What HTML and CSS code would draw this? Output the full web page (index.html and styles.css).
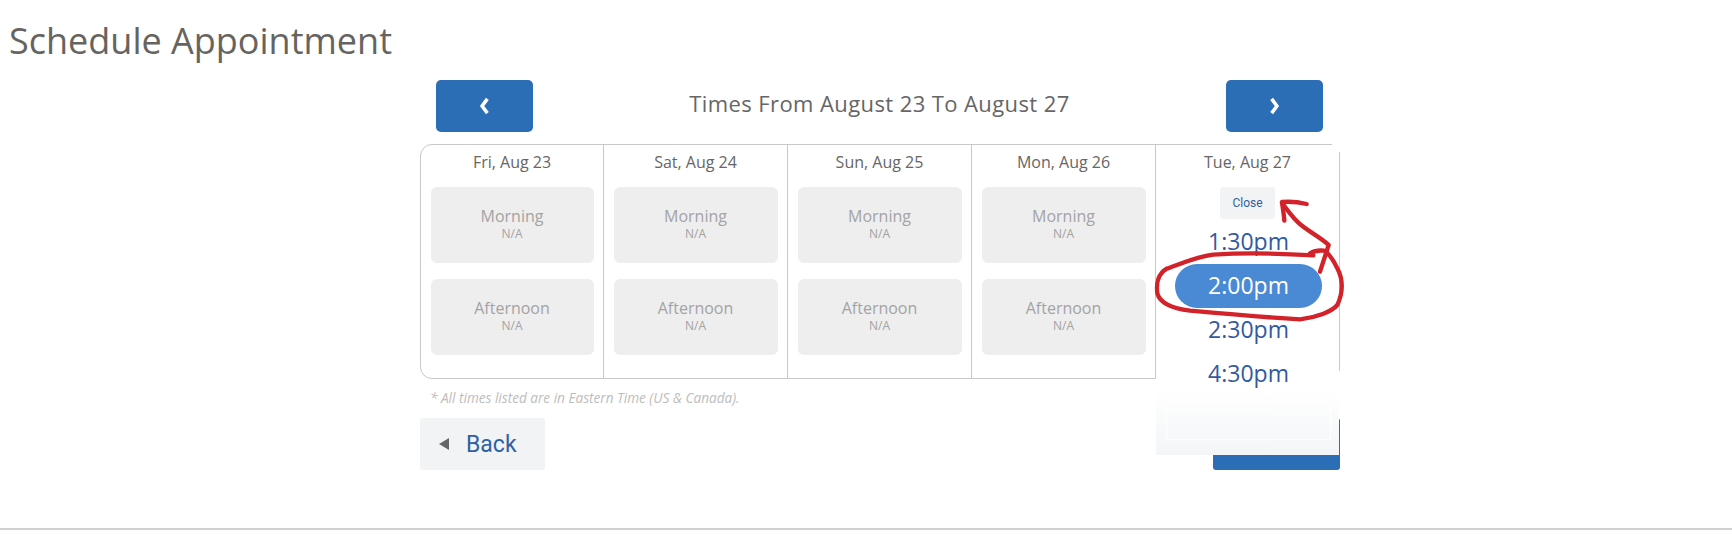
FILE: index.html
```html
<!DOCTYPE html>
<html lang="en">
<head>
<meta charset="utf-8">
<title>Schedule Appointment</title>
<link rel="stylesheet" href="styles.css">
</head>
<body>
<h1 class="page-title">Schedule Appointment</h1>
<main class="scheduler">
  <div class="week-nav">
    <button class="nav-btn" aria-label="Previous">
      <svg class="chev" viewBox="0 0 10 16"><path d="M7.6 1.5 2.8 8l4.8 6.5" /></svg>
    </button>
    <h2 class="week-title">Times From August 23 To August 27</h2>
    <button class="nav-btn" aria-label="Next">
      <svg class="chev" viewBox="0 0 10 16"><path d="M2.4 1.5 7.2 8l-4.8 6.5" /></svg>
    </button>
  </div>
  <div class="week">
    <section class="day">
      <h3 class="day-name">Fri, Aug 23</h3>
      <div class="slot"><span class="slot-name">Morning</span><span class="slot-na">N/A</span></div>
      <div class="slot"><span class="slot-name">Afternoon</span><span class="slot-na">N/A</span></div>
    </section>
    <section class="day">
      <h3 class="day-name">Sat, Aug 24</h3>
      <div class="slot"><span class="slot-name">Morning</span><span class="slot-na">N/A</span></div>
      <div class="slot"><span class="slot-name">Afternoon</span><span class="slot-na">N/A</span></div>
    </section>
    <section class="day">
      <h3 class="day-name">Sun, Aug 25</h3>
      <div class="slot"><span class="slot-name">Morning</span><span class="slot-na">N/A</span></div>
      <div class="slot"><span class="slot-name">Afternoon</span><span class="slot-na">N/A</span></div>
    </section>
    <section class="day">
      <h3 class="day-name">Mon, Aug 26</h3>
      <div class="slot"><span class="slot-name">Morning</span><span class="slot-na">N/A</span></div>
      <div class="slot"><span class="slot-name">Afternoon</span><span class="slot-na">N/A</span></div>
    </section>
    <section class="day day-open">
      <div class="times-panel">
        <h3 class="day-name">Tue, Aug 27</h3>
        <button class="close-btn">Close</button>
        <ul class="times">
          <li class="time">1:30pm</li>
          <li class="time time-selected">2:00pm</li>
          <li class="time">2:30pm</li>
          <li class="time">4:30pm</li>
        </ul>
        <div class="panel-fade"></div>
      </div>
    </section>
  </div>
  <p class="tz-note">* All times listed are in Eastern Time (US &amp; Canada).</p>
  <div class="actions">
    <button class="back-btn"><span class="back-arrow"></span>Back</button>
    <button class="next-btn"></button>
  </div>
</main>
<hr class="footer-rule">
<svg class="scribble" viewBox="0 0 900 810" aria-hidden="true">
  <path d="M640 586C540 580 430 578 340 584C290 590 240 612 200 626C175 640 168 670 172 700C180 730 215 745 270 752C380 762 500 772 600 778C650 772 695 755 712 735C728 700 730 660 712 625C700 600 690 582 672 572C655 570 640 574 630 580" />
  <path d="M660 635C668 610 676 585 686 555C660 530 620 512 595 488C575 468 560 448 546 428" />
  <path d="M620 432C595 426 570 424 546 426C548 445 552 462 553 482" />
</svg>
</body>
</html>
```
FILE: styles.css
```css
* { box-sizing: border-box; }
html, body { margin: 0; padding: 0; }
body {
  position: relative;
  height: 535px;
  overflow: hidden;
  background: #fff;
  font-family: "Open Sans", sans-serif;
  color: #666;
}
.page-title {
  margin: 0;
  padding: 18px 0 0 9px;
  height: 80px;
  font-size: 36px;
  line-height: 46px;
  font-weight: 400;
  color: #666460;
}
.scheduler { width: 920px; margin-left: 420px; }
.week-nav {
  display: flex;
  align-items: center;
  justify-content: space-between;
  padding: 0 17px 0 16px;
  height: 52px;
  margin-bottom: 12px;
}
.nav-btn {
  width: 97px;
  height: 52px;
  border: 0;
  border-radius: 5px;
  background: #2c6eb6;
  display: flex;
  align-items: center;
  justify-content: center;
  padding: 0;
}
.chev { width: 11px; height: 18px; }
.chev path { fill: none; stroke: #fff; stroke-width: 3.2; }
.week-title {
  margin: 0;
  padding-bottom: 6px;
  font-size: 22px;
  font-weight: 400;
  color: #666;
  letter-spacing: 0.4px;
}
.week {
  display: grid;
  grid-template-columns: 183px 184px 184px 184px 1fr;
  height: 235px;
  border: 1px solid #c8c8c8;
  border-radius: 12px 0 0 12px;
}
.day {
  position: relative;
  padding: 0 9.5px;
  border-right: 1px solid #c8c8c8;
}
.day-open { border-right: 0; padding: 0; }
.day-name {
  margin: 0;
  height: 42px;
  line-height: 35px;
  text-align: center;
  font-size: 16px;
  font-weight: 400;
  color: #666;
}
.slot {
  height: 76px;
  margin-bottom: 16px;
  border-radius: 6px;
  background: #eee;
  display: flex;
  flex-direction: column;
  align-items: center;
  padding-top: 19px;
  color: #a3a3a3;
}
.slot-name { font-size: 16px; line-height: 20px; }
.slot-na { font-size: 12px; line-height: 15px; }
.times-panel {
  position: absolute;
  top: 0;
  left: 0;
  right: 0;
  height: 310px;
  display: flex;
  flex-direction: column;
  align-items: center;
  background: linear-gradient(#fff 0, #fff 245px, #f3f5f7 100%);
}
.times-panel::before {
  content: "";
  position: absolute;
  top: -1px;
  right: -1px;
  width: 8px;
  height: 8px;
  background: #fff;
}
.times-panel::after {
  content: "";
  position: absolute;
  top: 226px;
  right: -1px;
  width: 1px;
  height: 48px;
  background: #fff;
}
.close-btn {
  width: 55px;
  height: 32px;
  flex: none;
  border: 0;
  border-radius: 3px;
  background: #f1f3f5;
  color: #31609e;
  font-family: Roboto, sans-serif;
  font-size: 12px;
  padding: 0;
}
.times {
  list-style: none;
  margin: 1px 0 0 19px;
  padding: 0;
  width: 147px;
  align-self: flex-start;
}
.time {
  height: 44px;
  padding-bottom: 2px;
  line-height: 42px;
  text-align: center;
  font-size: 23px;
  color: #35599c;
}
.time-selected {
  border-radius: 22px;
  background: #4a8ad4;
  color: #fff;
}
.panel-fade {
  position: absolute;
  left: 10px;
  right: 8px;
  bottom: 15px;
  height: 40px;
  border: 1px solid #fff;
  border-top: 0;
}
.tz-note {
  margin: 0;
  height: 39px;
  padding: 10px 0 0 10px;
  font-size: 13.6px;
  line-height: 18px;
  font-style: italic;
  color: #bdbdbd;
}
.actions {
  display: flex;
  justify-content: space-between;
  height: 52px;
}
.back-btn {
  width: 125px;
  height: 52px;
  border: 0;
  border-radius: 2px;
  background: #f1f3f5;
  color: #2f62a3;
  font-family: Roboto, sans-serif;
  font-size: 23px;
  display: flex;
  align-items: center;
  padding: 0 0 0 19px;
}
.back-arrow {
  width: 0;
  height: 0;
  margin-right: 17px;
  border-style: solid;
  border-width: 6.5px 10px 6.5px 0;
  border-color: transparent #666 transparent transparent;
}
.next-btn {
  width: 127px;
  height: 52px;
  border: 0;
  border-radius: 3px;
  background: #2c6eb6;
}
.footer-rule {
  margin: 58px 0 0;
  border: 0;
  border-top: 2px solid #d0d0d0;
}
.scribble {
  position: absolute;
  left: 1100px;
  top: 60px;
  width: 300px;
  height: 270px;
  overflow: visible;
}
.scribble path {
  fill: none;
  stroke: #d2222a;
  stroke-width: 13;
  stroke-linecap: round;
  stroke-linejoin: round;
}
```
